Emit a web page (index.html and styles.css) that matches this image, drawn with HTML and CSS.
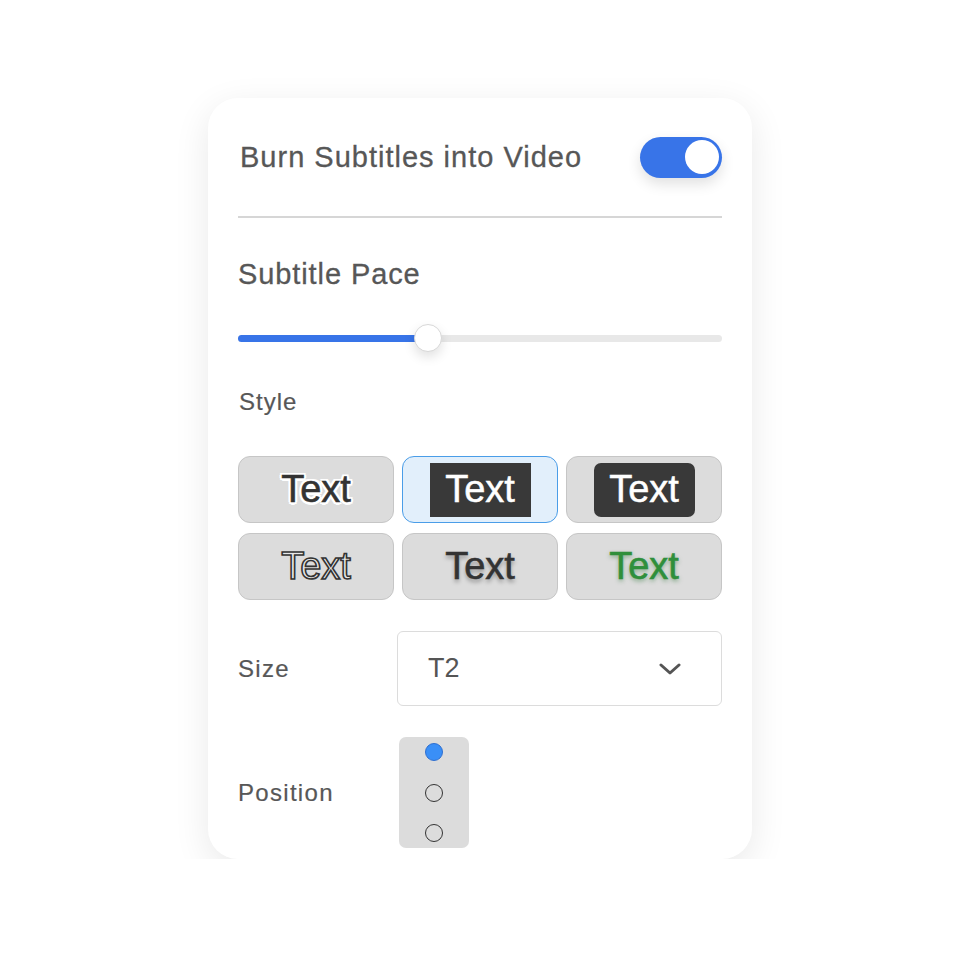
FILE: index.html
```html
<!DOCTYPE html>
<html lang="en">
<head>
  <meta charset="UTF-8">
  <title>Subtitle Settings</title>
  <link rel="stylesheet" href="styles.css">
</head>
<body>

  <div class="card">

    <div class="header">
      <span class="title">Burn Subtitles into Video</span>
      <div class="toggle on">
        <div class="knob"></div>
      </div>
    </div>

    <div class="divider"></div>

    <div class="pace-label">Subtitle Pace</div>
    <div class="slider">
      <div class="track"></div>
      <div class="fill" style="width: 190px"></div>
      <div class="thumb" style="left: 176px"></div>
    </div>

    <div class="style-label">Style</div>

    <div class="style-grid">
      <div class="style-btn"><span class="s-stroke">Text</span></div>
      <div class="style-btn selected"><span class="s-box">Text</span></div>
      <div class="style-btn"><span class="s-round">Text</span></div>
      <div class="style-btn"><span class="s-outline">Text</span></div>
      <div class="style-btn"><span class="s-shadow">Text</span></div>
      <div class="style-btn"><span class="s-green">Text</span></div>
    </div>

    <div class="size-row">
      <span class="row-label">Size</span>
      <div class="select">
        <span>T2</span>
        <svg width="22" height="12" viewBox="0 0 22 12">
          <path d="M2 2 L11 10 L20 2" fill="none" stroke="#555" stroke-width="3" stroke-linecap="round" stroke-linejoin="round"/>
        </svg>
      </div>
    </div>

    <div class="position-row">
      <span class="row-label">Position</span>
      <div class="radio-box">
        <span class="radio checked"></span>
        <span class="radio"></span>
        <span class="radio"></span>
      </div>
    </div>

  </div>

</body>
</html>
```

FILE: styles.css
```css
body {
  margin: 0;
  background: #fff;
  font-family: "Liberation Sans", Arial, sans-serif;
  color: #575757;
}

.card {
  width: 544px;
  box-sizing: border-box;
  margin: 98px auto 0;
  padding: 36px 30px 11px;
  background: #fff;
  border-radius: 30px;
  box-shadow: 0 10px 36px rgba(0, 0, 0, 0.09);
}

/* header with toggle */
.header {
  display: flex;
  justify-content: space-between;
  align-items: center;
  height: 46px;
  padding-left: 2px;
}
.title {
  font-size: 29px;
  letter-spacing: 1px;
  -webkit-text-stroke: 0.3px #575757;
}
.toggle {
  width: 82px;
  height: 41px;
  border-radius: 21px;
  background: #3874e8;
  box-shadow: 0 6px 14px rgba(0, 0, 0, 0.12);
  display: flex;
  align-items: center;
  justify-content: flex-end;
  padding: 0 3px;
  box-sizing: border-box;
}
.knob {
  width: 34px;
  height: 34px;
  border-radius: 50%;
  background: #fff;
}

.divider {
  height: 2px;
  background: #d6d6d6;
  margin-top: 36px;
}

.pace-label {
  margin-top: 41px;
  font-size: 29px;
  line-height: 30px;
  letter-spacing: 0.9px;
  -webkit-text-stroke: 0.3px #575757;
}

/* slider */
.slider {
  position: relative;
  height: 28px;
  margin-top: 35px;
}
.track, .fill {
  position: absolute;
  top: 11px;
  left: 0;
  height: 7px;
  border-radius: 4px;
}
.track {
  width: 100%;
  background: #e8e8e8;
}
.fill {
  background: #3874e8;
}
.thumb {
  position: absolute;
  top: 0;
  width: 28px;
  height: 28px;
  box-sizing: border-box;
  border-radius: 50%;
  background: #fff;
  border: 1px solid #d8d8d8;
  box-shadow: 0 5px 12px rgba(0, 0, 0, 0.12);
}

.style-label {
  margin-top: 37px;
  font-size: 24px;
  line-height: 26px;
  letter-spacing: 1px;
  padding-left: 1px;
  -webkit-text-stroke: 0.2px #575757;
}

/* style presets */
.style-grid {
  margin-top: 41px;
  display: grid;
  grid-template-columns: repeat(3, 1fr);
  grid-auto-rows: 67px;
  column-gap: 8px;
  row-gap: 10px;
}
.style-btn {
  display: flex;
  align-items: center;
  justify-content: center;
  background: #dcdcdc;
  border: 1.5px solid #c6c6c6;
  border-radius: 12px;
  font-size: 38px;
  color: #333;
}
.style-btn.selected {
  background: #e2effb;
  border-color: #4a9de8;
}
.s-stroke {
  -webkit-text-stroke: 0.6px #333;
  text-shadow: -2.5px 0 #fff, 2.5px 0 #fff, 0 -2.5px #fff, 0 2.5px #fff,
    -2px -2px #fff, 2px -2px #fff, -2px 2px #fff, 2px 2px #fff;
}
.s-box, .s-round {
  display: flex;
  align-items: center;
  justify-content: center;
  width: 101px;
  height: 54px;
  background: #393939;
  color: #fff;
  -webkit-text-stroke: 0.5px #fff;
}
.s-round {
  border-radius: 7px;
}
.s-outline {
  color: #e8e8e8;
  -webkit-text-stroke: 1.6px #333;
}
.s-shadow {
  -webkit-text-stroke: 0.6px #333;
  text-shadow: 0 3px 4px rgba(0, 0, 0, 0.35);
}
.s-green {
  color: #2f8f3b;
  -webkit-text-stroke: 0.6px #2f8f3b;
  text-shadow: 0 2px 4px rgba(30, 110, 40, 0.5);
}

/* size + position rows */
.size-row {
  margin-top: 31px;
  display: grid;
  grid-template-columns: 159px 1fr;
  align-items: center;
}
.row-label {
  font-size: 24px;
  letter-spacing: 1.3px;
  -webkit-text-stroke: 0.2px #575757;
}
.select {
  height: 75px;
  box-sizing: border-box;
  border: 1.5px solid #dcdcdc;
  border-radius: 6px;
  display: flex;
  align-items: center;
  justify-content: space-between;
  padding: 0 40px 0 30px;
  font-size: 27px;
  color: #555;
}

.position-row {
  margin-top: 31px;
  display: grid;
  grid-template-columns: 161px 1fr;
  align-items: center;
}
.radio-box {
  width: 70px;
  height: 111px;
  background: #dcdcdc;
  border-radius: 7px;
  display: flex;
  flex-direction: column;
  align-items: center;
  justify-content: space-between;
  padding: 6px 0 6px;
  box-sizing: border-box;
}
.radio {
  width: 18px;
  height: 18px;
  box-sizing: border-box;
  border-radius: 50%;
  border: 1.5px solid #333;
}
.radio.checked {
  background: #3a8ff7;
  border: 1px solid #2f6fd0;
}
```
